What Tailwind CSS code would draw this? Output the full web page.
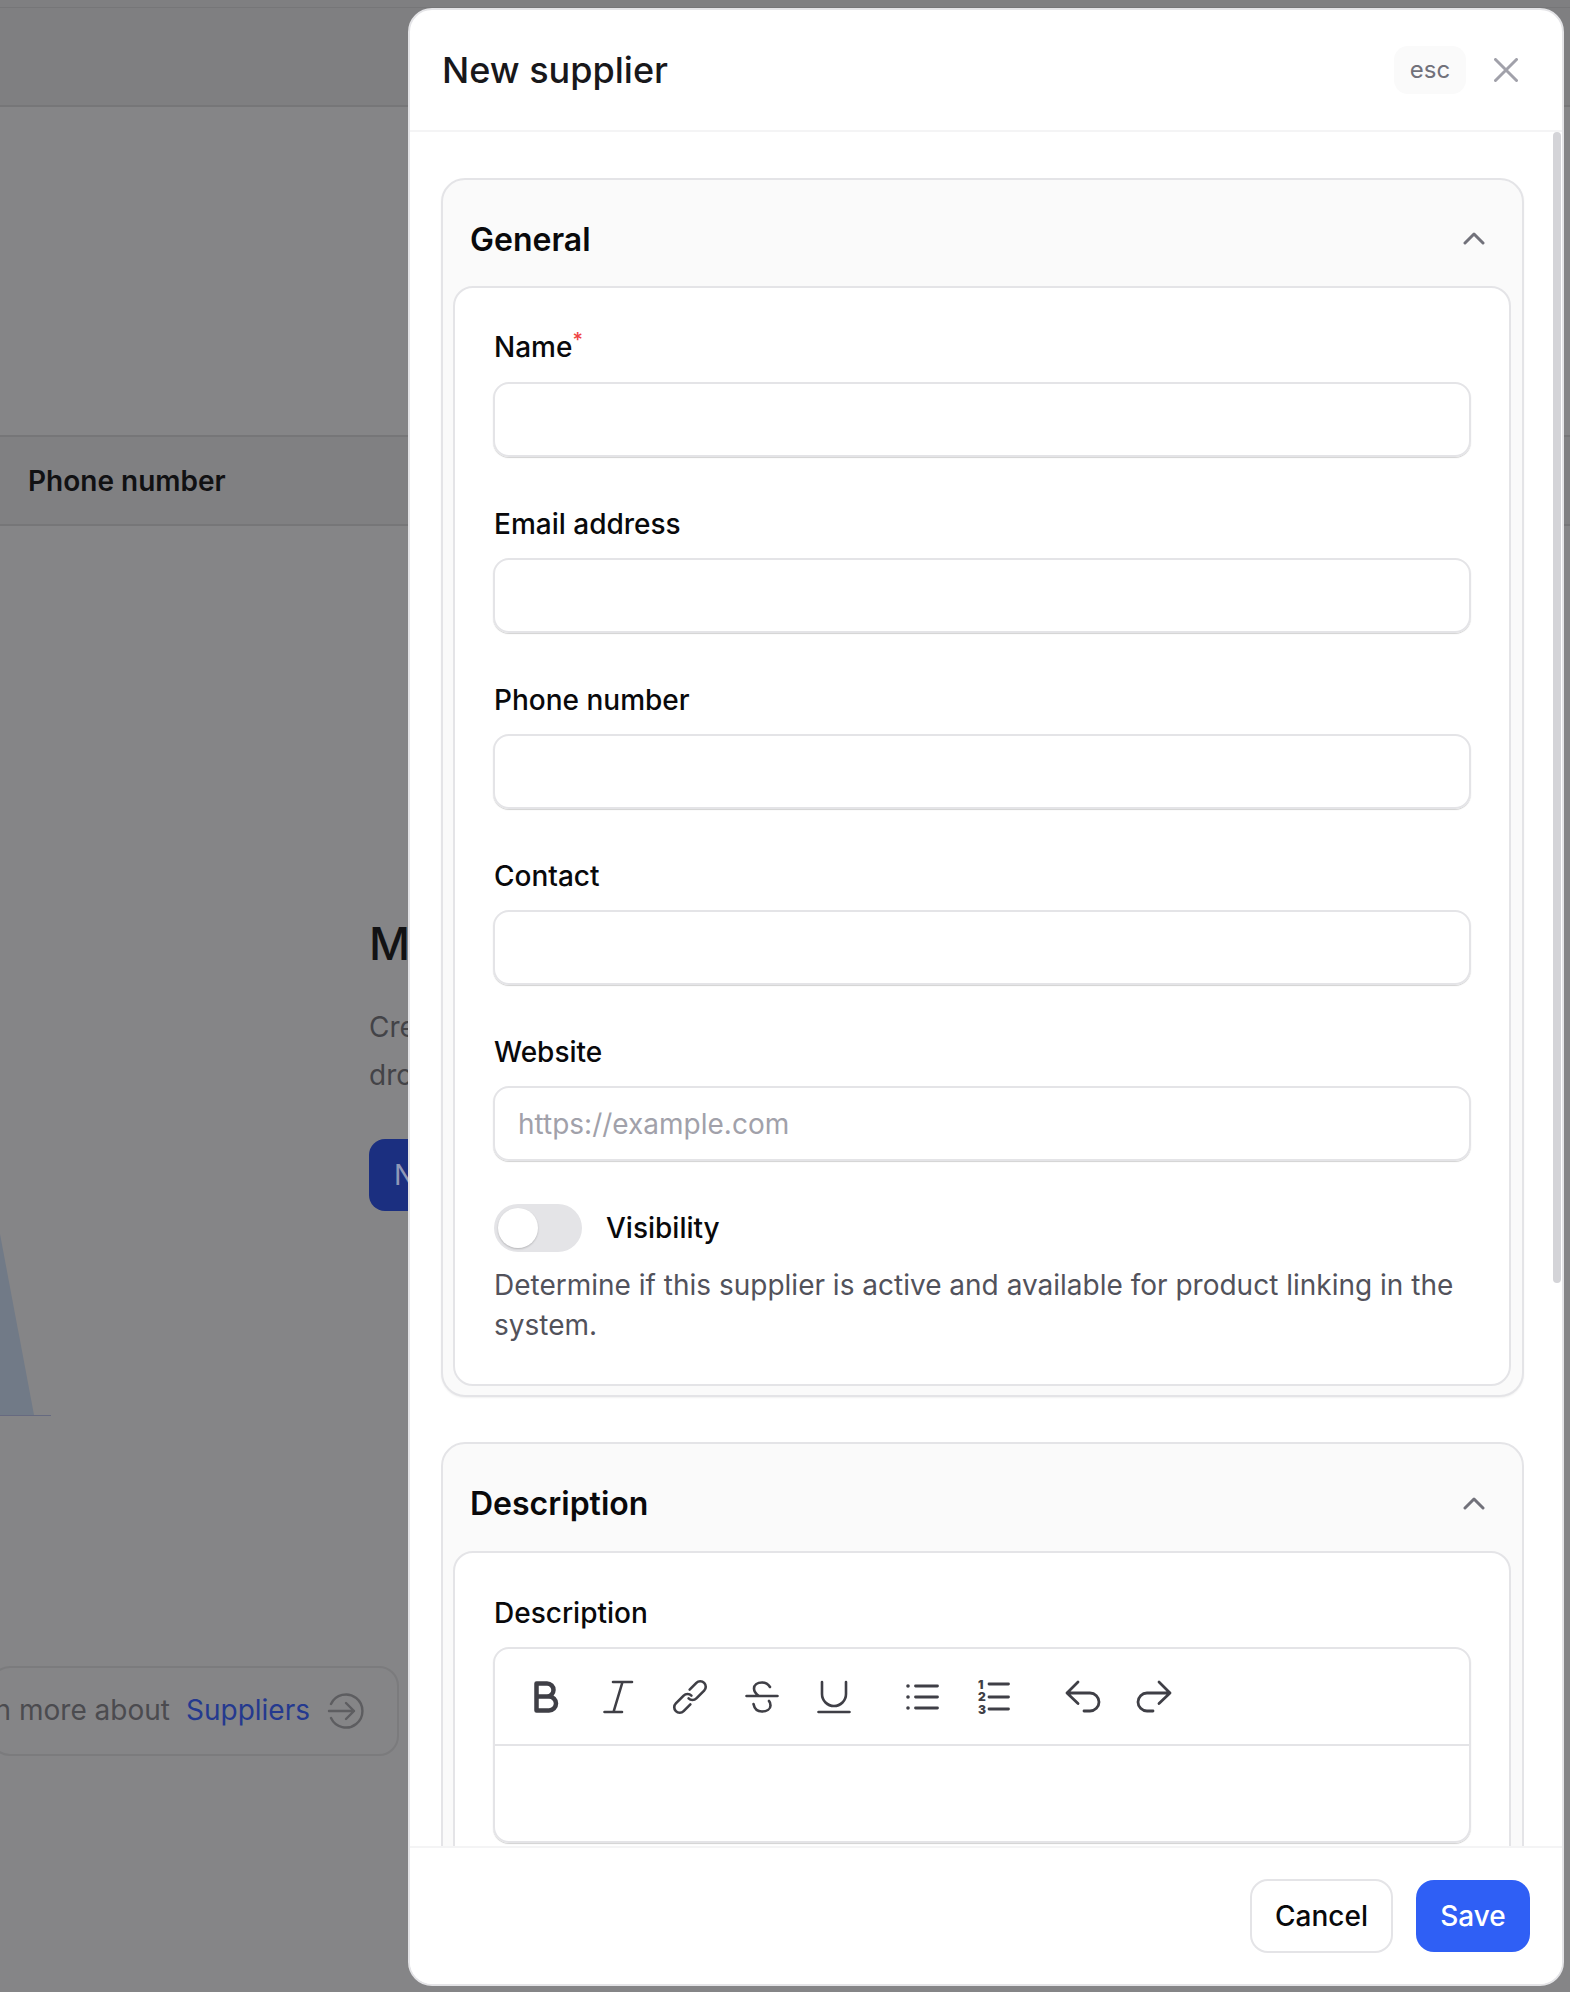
<!DOCTYPE html>
<html lang="en">
<head>
  <meta charset="UTF-8" />
  <title>New supplier</title>
  <script src="https://cdn.jsdelivr.net/npm/@tailwindcss/browser@4"></script>
</head>
<body class="bg-[#858587] font-['Inter',sans-serif]">
<div class="relative w-[1570px] h-[1992px] overflow-hidden">
  <!-- page behind the dialog -->
  <div class="h-[8px] bg-[#7f7f81] border-b border-[#767678]"></div>
  <div class="h-[99px] bg-[#7f7f81] border-b-2 border-[#767678]"></div>
  <div class="h-[328px]"></div>
  <div class="h-[91px] bg-[#808082] border-y-2 border-[#767678] flex items-center pl-[28px] text-[28px] font-semibold text-[#111113]">Phone number</div>
  <div class="flex">
    <div class="w-[369px] shrink-0 pt-[708px]">
      <svg width="52" height="182" viewBox="0 0 52 182" class="block">
        <polygon points="0,0 34,181 0,181" fill="#717a87" />
        <line x1="0" y1="181.5" x2="51" y2="181.5" stroke="#666a80" />
      </svg>
    </div>
    <div class="pt-[391px] whitespace-nowrap">
      <div class="text-[45px] leading-[54px] font-medium text-[#121214]">Manage suppliers</div>
      <div class="mt-[32px] text-[28px] leading-[48px] text-[#434347]">Create a supplier<br />drop it here</div>
      <div class="mt-[40px] w-[260px] h-[72px] rounded-[16px] bg-[#1b2f80] text-[#8f98b8] text-[28px] leading-[72px] pl-[25px]">New</div>
    </div>
  </div>
  <div class="mt-[250px] -ml-[10px] w-[409px] h-[90px] rounded-[20px] border-2 border-[#7b7b7d] flex items-center justify-end pr-[32px] gap-[16px] whitespace-nowrap text-[28px] text-[#4b4b4f]">
    <span class="pb-[2px]">Learn more about</span>
    <span class="pb-[2px] text-[#24398f]">Suppliers</span>
    <svg width="38" height="38" viewBox="0 0 38 38" fill="none" stroke="#5d5d60" stroke-width="2.4" stroke-linecap="round" stroke-linejoin="round" class="shrink-0 ml-[1px]">
      <path d="M4 12a16.5 16.5 0 1 1 0 14" />
      <path d="M2 19h25M19 11l8 8-8 8" />
    </svg>
  </div>

  <!-- dialog -->
  <div class="absolute left-[408px] top-[8px] w-[1156px] h-[1978px] bg-white rounded-[24px] border-2 border-[#e4e4e7] flex flex-col overflow-hidden">
    <div class="h-[122px] shrink-0 border-b-2 border-[#f4f4f5] flex items-center pl-[32px] pr-[44px]">
      <h1 class="text-[36px] font-medium text-[#18181b] flex-1">New supplier</h1>
      <span class="w-[72px] h-[48px] rounded-[14px] bg-[#fafafa] flex items-center justify-center text-[24px] text-[#71717a]">esc</span>
      <svg width="24" height="24" viewBox="0 0 24 24" fill="none" stroke="#a1a1aa" stroke-width="3" stroke-linecap="round" class="ml-[28px]">
        <path d="M1.500 1.500l21 21M22.500 1.500l-21 21" />
      </svg>
    </div>

    <div class="relative flex-1 min-h-0 overflow-hidden pl-[31px] pr-[38px] pt-[46px]">
      <div class="absolute right-[1px] top-[0px] w-[8px] h-[1151px] rounded-full bg-[#d4d4d8]"></div>

      <section class="rounded-[24px] border-2 border-[#e4e4e7] bg-[#fafafa] pl-[10px] pr-[11px] pb-[9px] shadow-[0_1px_2px_rgba(0,0,0,0.06)]">
        <div class="h-[106px] flex items-center justify-between pl-[17px] pr-[26px]">
          <h2 class="pt-[13px] text-[32px] font-semibold text-[#09090b]">General</h2>
          <svg width="22" height="14" viewBox="0 0 22 14" fill="none" stroke="#71717a" stroke-width="3" stroke-linecap="round" stroke-linejoin="round" class="mt-[10px]"><path d="M2 12l9-9 9 9" /></svg>
        </div>
        <div class="rounded-[20px] border-2 border-[#e4e4e7] bg-white px-[38px] pt-[39px] pb-[39px]">
          <label class="block pl-[1px] text-[28px] leading-[40px] font-medium text-[#09090b]">Name<sup class="text-[#ef4444] text-[20px] leading-none">*</sup></label>
          <input type="text" class="mt-[15px] block w-full h-[75px] rounded-[16px] border-2 border-[#e4e4e7] shadow-[0_1px_1px_rgba(0,0,0,0.18)] px-[23px] text-[28px]" />

          <label class="block mt-[47px] pl-[1px] text-[28px] leading-[40px] font-medium text-[#09090b]">Email address</label>
          <input type="text" class="mt-[14px] block w-full h-[75px] rounded-[16px] border-2 border-[#e4e4e7] shadow-[0_1px_1px_rgba(0,0,0,0.18)] px-[23px] text-[28px]" />

          <label class="block mt-[47px] pl-[1px] text-[28px] leading-[40px] font-medium text-[#09090b]">Phone number</label>
          <input type="text" class="mt-[14px] block w-full h-[75px] rounded-[16px] border-2 border-[#e4e4e7] shadow-[0_1px_1px_rgba(0,0,0,0.18)] px-[23px] text-[28px]" />

          <label class="block mt-[47px] pl-[1px] text-[28px] leading-[40px] font-medium text-[#09090b]">Contact</label>
          <input type="text" class="mt-[14px] block w-full h-[75px] rounded-[16px] border-2 border-[#e4e4e7] shadow-[0_1px_1px_rgba(0,0,0,0.18)] px-[23px] text-[28px]" />

          <label class="block mt-[47px] pl-[1px] text-[28px] leading-[40px] font-medium text-[#09090b]">Website</label>
          <input type="text" placeholder="https://example.com" class="mt-[14px] block w-full h-[75px] rounded-[16px] border-2 border-[#e4e4e7] shadow-[0_1px_1px_rgba(0,0,0,0.18)] px-[23px] text-[28px] placeholder:text-[#a1a1aa]" />

          <div class="mt-[43px] ml-[1px] flex items-center gap-[24px]">
            <div class="w-[88px] h-[48px] rounded-full bg-[#e4e4e7] p-[4px]">
              <div class="w-[40px] h-[40px] rounded-full bg-white shadow-[0_1px_2px_rgba(0,0,0,0.2)]"></div>
            </div>
            <span class="text-[28px] font-medium text-[#09090b]">Visibility</span>
          </div>
          <p class="mt-[13px] pl-[1px] text-[28px] leading-[40px] text-[#52525b]">Determine if this supplier is active and available for product linking in the system.</p>
        </div>
      </section>

      <section class="mt-[45px] rounded-[24px] border-2 border-[#e4e4e7] bg-[#fafafa] pl-[10px] pr-[11px] pb-[10px]">
        <div class="h-[107px] flex items-center justify-between pl-[17px] pr-[26px]">
          <h2 class="pt-[13px] text-[32px] font-semibold text-[#09090b]">Description</h2>
          <svg width="22" height="14" viewBox="0 0 22 14" fill="none" stroke="#71717a" stroke-width="3" stroke-linecap="round" stroke-linejoin="round" class="mt-[10px]"><path d="M2 12l9-9 9 9" /></svg>
        </div>
        <div class="rounded-[20px] border-2 border-[#e4e4e7] bg-white px-[38px] pt-[40px] pb-[40px]">
          <label class="block pl-[1px] text-[28px] leading-[40px] font-medium text-[#09090b]">Description</label>
          <div class="mt-[14px] rounded-[16px] border-2 border-[#e4e4e7] shadow-[0_1px_1px_rgba(0,0,0,0.18)]">
            <div class="h-[97px] border-b-2 border-[#e4e4e7] flex items-center pl-[32px] text-[#3f3f46]">
              <div class="flex gap-[36.300px]">
                <svg width="36" height="36" viewBox="0 0 36 36" fill="none" stroke="currentColor" stroke-width="4.500" stroke-linejoin="round"><path d="M9.500 4.500h10.500a6.500 6.500 0 0 1 0 13H9.500zM9.500 17.500h12.500a7 7 0 0 1 0 14H9.500z" /></svg>
                <svg width="36" height="36" viewBox="0 0 36 36" fill="none" stroke="currentColor" stroke-width="2.600" stroke-linecap="round"><path d="M14 3h19M5.500 33H23M23.500 3l-9 30" /></svg>
                <svg width="36" height="36" viewBox="0 0 36 36" fill="none" stroke="currentColor" stroke-width="2.600" stroke-linecap="round" class="overflow-visible"><g transform="rotate(-45 18 18)"><path d="M13 23.500H3.500a5.500 5.500 0 0 1 0-11h11a5.500 5.500 0 0 1 5.500 5.500" /><path d="M23 12.500h9.500a5.500 5.500 0 0 1 0 11h-11a5.500 5.500 0 0 1-5.500-5.500" /></g></svg>
                <svg width="36" height="36" viewBox="0 0 36 36" fill="none" stroke="currentColor" stroke-width="2.600" stroke-linecap="round"><path d="M2.500 17h31M26 8c-2-3.500-5-4.500-8-4.500-5 0-8 2.500-8 6 0 3 2 5.500 5 7.500M9.500 25c1 5 4.500 7.500 8.500 7.500 5 0 8.500-2.500 8.500-6 0-2-.5-3.500-1.500-4.500" /></svg>
                <svg width="36" height="36" viewBox="0 0 36 36" fill="none" stroke="currentColor" stroke-width="2.600" stroke-linecap="round"><path d="M6 3v12a12 12 0 0 0 24 0V3M2.500 33h31" /></svg>
              </div>
              <div class="flex gap-[35px] ml-[52px]">
                <svg width="36" height="36" viewBox="0 0 36 36" fill="none" stroke="currentColor" stroke-width="2.800" stroke-linecap="round"><path d="M11.500 7h22M11.500 18h22M11.500 29h22" /><circle cx="4" cy="7" r="1.800" fill="currentColor" stroke="none" /><circle cx="4" cy="18" r="1.800" fill="currentColor" stroke="none" /><circle cx="4" cy="29" r="1.800" fill="currentColor" stroke="none" /></svg>
                <svg width="36" height="36" viewBox="0 0 36 36" fill="none" stroke="currentColor" stroke-width="2.800" stroke-linecap="round"><path d="M14 5h19.500M14 18h19.500M14 30h19.500" /><text x="3" y="9.500" font-size="12" font-weight="900" fill="currentColor" stroke="none">1</text><text x="3" y="22" font-size="12" font-weight="900" fill="currentColor" stroke="none">2</text><text x="3" y="34.500" font-size="12" font-weight="900" fill="currentColor" stroke="none">3</text></svg>
              </div>
              <div class="flex gap-[35px] ml-[54px]">
                <svg width="36" height="36" viewBox="0 0 36 36" fill="none" stroke="currentColor" stroke-width="2.800" stroke-linecap="round" stroke-linejoin="round"><path d="M13 3L2 14l11 10.500M2 14h23a9 9 0 0 1 0 18h-6" /></svg>
                <svg width="36" height="36" viewBox="0 0 36 36" fill="none" stroke="currentColor" stroke-width="2.800" stroke-linecap="round" stroke-linejoin="round"><path d="M23 3l11 11-11 10.500M34 14H11a9 9 0 0 0 0 18h6" /></svg>
              </div>
            </div>
            <div class="h-[95px]"></div>
          </div>
        </div>
      </section>
    </div>

    <div class="h-[138px] shrink-0 border-t-2 border-[#f4f4f5] bg-white flex items-center justify-end gap-[23px] pr-[32px] relative z-10">
      <button class="w-[143px] h-[74px] rounded-[18px] border-2 border-[#e4e4e7] text-[28px] font-medium text-[#09090b] bg-white">Cancel</button>
      <button class="w-[114px] h-[72px] rounded-[18px] bg-[#2f5ff5] text-[28px] font-medium text-white">Save</button>
    </div>
  </div>
</div>
</body>
</html>
